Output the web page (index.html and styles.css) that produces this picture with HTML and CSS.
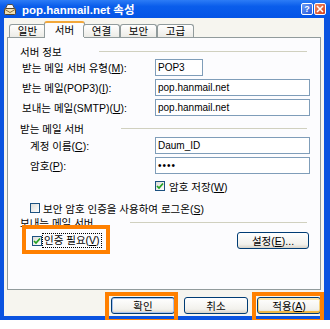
FILE: index.html
```html
<!DOCTYPE html>
<html lang="ko">
<head>
    <meta charset="UTF-8">
    <meta name="viewport" content="width=device-width, initial-scale=1.0">
    <title>pop.hanmail.net 속성</title>
    <link rel="stylesheet" href="styles.css">
</head>
<body>
    <div class="window">
        <div class="titlebar">
            <svg class="title-icon" width="14" height="14" viewBox="0 0 14 14">
                <path d="M2.5 6.5 L4.5 2.5 H9.5 L11.5 6.5" fill="#fafafa" stroke="#4a4a4a"/>
                <rect x="1.5" y="6.5" width="11" height="6" rx="1" fill="#efdfb4" stroke="#5a4626"/>
                <path d="M2 7.5 L7 10.5 L12 7.5" fill="none" stroke="#8a6a36"/>
            </svg>
            <span class="title">pop.hanmail.net 속성</span>
            <span class="cap-btn help">?</span>
            <span class="cap-btn close">
                <svg width="8" height="8" viewBox="0 0 8 8"><path d="M1 1 L7 7 M7 1 L1 7" stroke="#fff" stroke-width="1.6"/></svg>
            </span>
        </div>
        <div class="client">
            <div class="tabs">
                <span class="tab">일반</span>
                <span class="tab active">서버</span>
                <span class="tab">연결</span>
                <span class="tab">보안</span>
                <span class="tab">고급</span>
            </div>
            <div class="panel">
                <div class="group-head"><span>서버 정보</span><i class="rule"></i></div>
                <div class="field">
                    <label>받는 메일 서버 유형(<u>M</u>):</label>
                    <div class="box short">POP3</div>
                </div>
                <div class="field">
                    <label>받는 메일(POP3)(<u>I</u>):</label>
                    <div class="box">pop.hanmail.net</div>
                </div>
                <div class="field">
                    <label>보내는 메일(SMTP)(<u>U</u>):</label>
                    <div class="box">pop.hanmail.net</div>
                </div>

                <div class="group-head second"><span>받는 메일 서버</span><i class="rule"></i></div>
                <div class="field inner first">
                    <label>계정 이름(<u>C</u>):</label>
                    <div class="box">Daum_ID</div>
                </div>
                <div class="field inner">
                    <label>암호(<u>P</u>):</label>
                    <div class="box secret">••••</div>
                </div>
                <div class="check-row col2 save">
                    <span class="checkbox"><svg width="8" height="8" viewBox="0 0 8 8"><path d="M1 4 L3 6 L7 1.5" fill="none" stroke="#21a121" stroke-width="1.7"/></svg></span>
                    <span>암호 저장(<u>W</u>)</span>
                </div>
                <div class="check-row indent spa">
                    <span class="checkbox"></span>
                    <span>보안 암호 인증을 사용하여 로그온(<u>S</u>)</span>
                </div>

                <div class="group-head"><span>보내는 메일 서버</span><i class="rule"></i></div>
                <div class="auth-row">
                    <div class="check-row">
                        <span class="checkbox"><svg width="8" height="8" viewBox="0 0 8 8"><path d="M1 4 L3 6 L7 1.5" fill="none" stroke="#21a121" stroke-width="1.7"/></svg></span>
                        <span class="focus">인증 필요(<u>V</u>)</span>
                    </div>
                    <button class="btn settings">설정(<u>E</u>)...</button>
                </div>
            </div>
            <div class="actions">
                <button class="btn default">확인</button>
                <button class="btn">취소</button>
                <button class="btn hot">적용(<u>A</u>)</button>
            </div>
        </div>
    </div>

    <div class="mark mark-auth"></div>
    <div class="mark mark-ok"></div>
    <div class="mark mark-apply"></div>
</body>
</html>
```

FILE: styles.css
```css
html, body {
    margin: 0;
    padding: 0;
}

body {
    position: relative;
    background: #fff;
    font-family: "Liberation Sans", "Noto Sans CJK KR", sans-serif;
    font-size: 10.5px;
    color: #000;
}

.window {
    width: 330px;
    height: 320px;
    box-sizing: border-box;
    background: #0a53e0;
    display: flex;
    flex-direction: column;
}

/* title bar */
.titlebar {
    height: 18px;
    display: flex;
    align-items: center;
    padding: 0 4px 0 3px;
    background: linear-gradient(#2c7cf6, #0a5deb 35%, #0454e6);
    color: #fff;
}

.title-icon {
    margin-right: 5px;
}

.title {
    flex: 1;
    font-weight: bold;
    font-size: 11.5px;
}

.cap-btn {
    width: 12px;
    height: 12px;
    box-sizing: border-box;
    border: 1px solid #fff;
    border-radius: 2px;
    display: flex;
    align-items: center;
    justify-content: center;
    font-weight: bold;
    font-size: 9px;
    margin-left: 1px;
}

.help {
    background: linear-gradient(135deg, #6e9cf5, #2358dc);
}

.close {
    background: linear-gradient(135deg, #f08a62, #d4401c);
}

/* client area */
.client {
    flex: 1;
    margin: 0 6px 4px 4px;
    background: #f6f5ef;
    display: flex;
    flex-direction: column;
}

.tabs {
    display: flex;
    align-items: flex-end;
    height: 16px;
    margin-top: 3px;
    padding-left: 5px;
    position: relative;
    z-index: 1;
}

.tab {
    width: 37px;
    height: 13px;
    box-sizing: border-box;
    border: 1px solid #919b9c;
    border-bottom: none;
    border-radius: 3px 3px 0 0;
    background: linear-gradient(#fff, #ecebe6);
    text-align: center;
    line-height: 12px;
}

.tab.active {
    width: 41px;
    height: 17px;
    margin: 0 -2px -1px;
    border-top: 2px solid #f2a73a;
    background: #fcfcfe;
    line-height: 14px;
}

.panel {
    margin: 0 3px;
    height: 253px;
    box-sizing: border-box;
    border: 1px solid #919b9c;
    background: #fcfcfe;
    padding-top: 7px;
}

.group-head {
    display: flex;
    align-items: center;
    height: 12px;
    padding: 0 13px 0 12px;
}

.group-head.second {
    margin-top: 5px;
}

.rule {
    flex: 1;
    height: 1px;
    margin-left: 37px;
    background: #d0d0bf;
}

.field {
    display: grid;
    grid-template-columns: 147px 155px;
    align-items: center;
    height: 20px;
}

.field label {
    padding-left: 14px;
}

.field.inner label {
    padding-left: 22px;
}

.field.first {
    margin-top: 1px;
}

.box {
    height: 17px;
    box-sizing: border-box;
    border: 1px solid #7f9db9;
    background: #fff;
    padding: 0 2px;
    line-height: 15px;
    font-size: 10px;
}

.box.short {
    width: 48px;
}

.box.secret {
    letter-spacing: 1px;
}

.check-row {
    display: flex;
    align-items: center;
    gap: 4px;
    height: 16px;
}

.check-row.col2 {
    padding-left: 147px;
}

.check-row.indent {
    padding-left: 22px;
    gap: 3px;
}

.check-row.save {
    margin-top: 3px;
}

.check-row.spa {
    margin-top: 6px;
}

.checkbox {
    width: 10px;
    height: 10px;
    box-sizing: border-box;
    border: 1px solid #1c5180;
    background: linear-gradient(135deg, #dcdcd7, #fff);
    display: flex;
    align-items: center;
    justify-content: center;
}

.auth-row {
    display: flex;
    align-items: center;
    justify-content: space-between;
    height: 17px;
    margin-top: 4px;
    padding: 0 11px 0 24px;
}

.auth-row .check-row {
    gap: 1px;
}

.focus {
    outline: 1px dotted #000;
    padding: 0 1px;
    line-height: 13px;
}

/* buttons */
.btn {
    width: 64px;
    height: 17px;
    padding: 0;
    box-sizing: border-box;
    border: 1px solid #003c74;
    border-radius: 3px;
    background: linear-gradient(#fff, #f2f1ec 75%, #d8d3c8);
    font-family: inherit;
    font-size: 10.5px;
    color: #000;
}

.btn.settings {
    width: 72px;
}

.btn.default {
    box-shadow: inset 0 0 0 1px #a7c2ef;
}

.btn.hot {
    box-shadow: inset 0 2px #fde4a6, inset 0 -2px #efb745, inset 1px 0 #f8d27a, inset -1px 0 #f8d27a;
}

.actions {
    display: flex;
    justify-content: flex-end;
    gap: 9px;
    margin-top: 7px;
    padding-right: 3px;
}

/* orange annotation frames */
.mark {
    position: absolute;
    box-sizing: border-box;
    border: 4px solid #ff8000;
}

.mark-auth {
    left: 22px;
    top: 225px;
    width: 88px;
    height: 29px;
}

.mark-ok {
    left: 105px;
    top: 292px;
    width: 73px;
    height: 31px;
}

.mark-apply {
    left: 252px;
    top: 292px;
    width: 72px;
    height: 31px;
}
```
